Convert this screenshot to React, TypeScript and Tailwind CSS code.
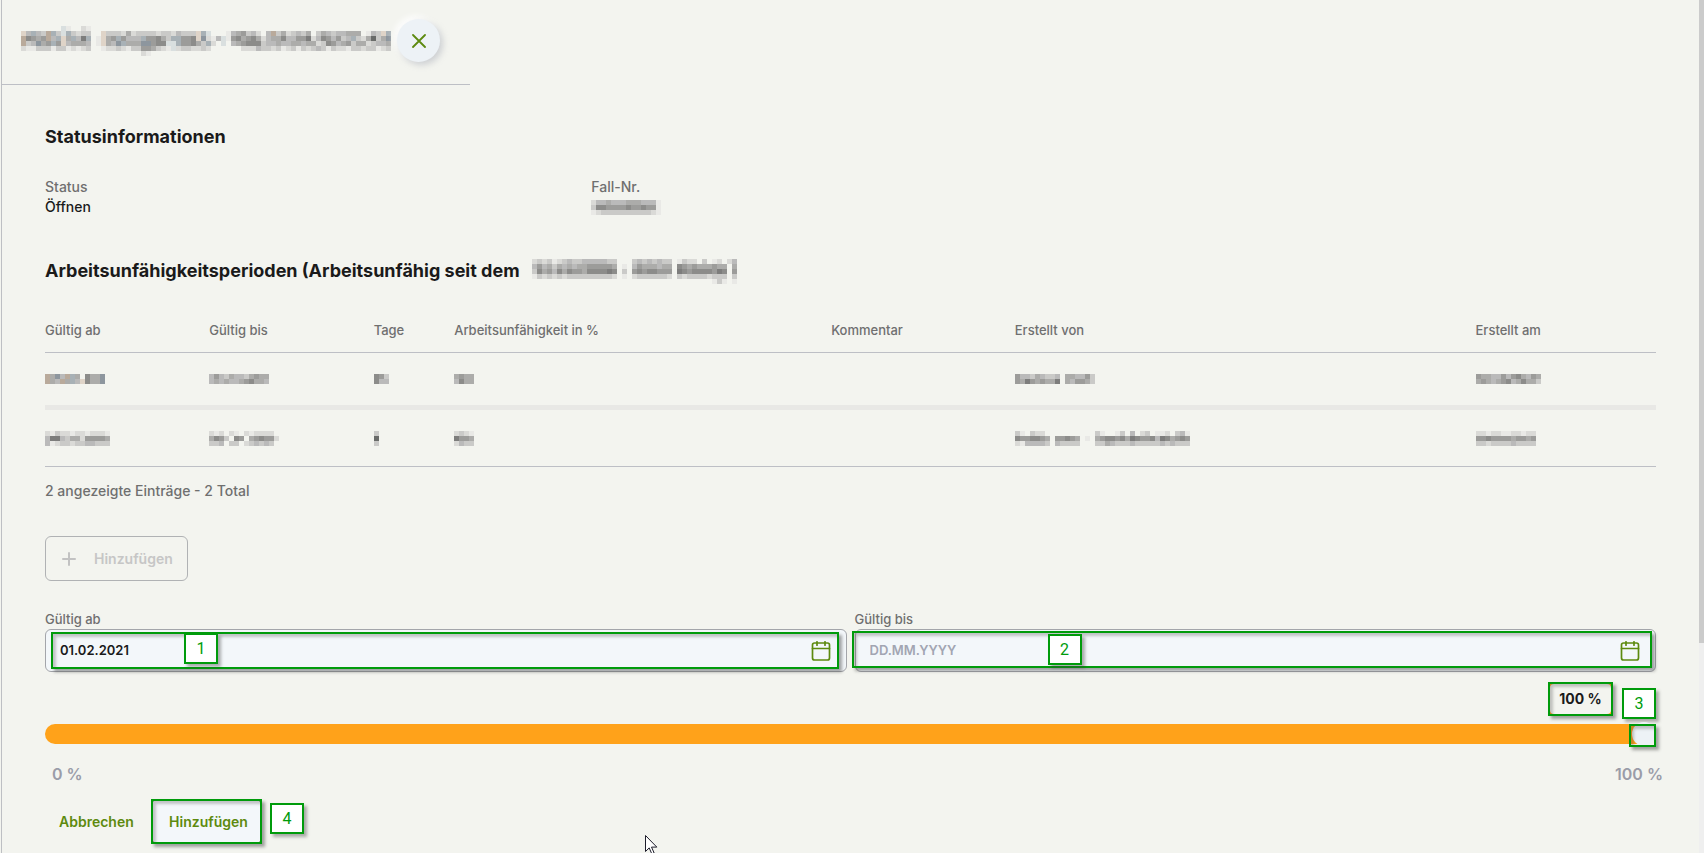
import { useState } from "react";
import type { ReactNode } from "react";

/*
 * Personal data is never rendered here, each value is a block of 5px cells
 * instead. Every character picks a colour, "." leaves the cell empty.
 */
const CELL = 5;

const CELL_COLORS: Record<string, string> = {
  "1": "#e9e9e6",
  "2": "#dadad7",
  "3": "#cacac8",
  "4": "#bababa",
  "5": "#acacaa",
  "6": "#9c9c9a",
  "7": "#8c8c8a",
  "8": "#7d7d7c",
  "9": "#696b69",
  w: "#dfd4c8",
  o: "#b9aa9b",
  c: "#d9dfdf",
  b: "#a8b1b6",
  s: "#8d969e",
};

function Mosaic({ rows }: { rows: string[] }) {
  const width = Math.max(...rows.map((r) => r.length)) * CELL;
  const height = rows.length * CELL;
  return (
    <svg width={width} height={height} shapeRendering="crispEdges" aria-hidden="true" className="block shrink-0">
      {rows.flatMap((row, y) =>
        row.split("").map((c, x) =>
          CELL_COLORS[c] ? (
            <rect key={`${x}-${y}`} x={x * CELL} y={y * CELL} width={CELL} height={CELL} fill={CELL_COLORS[c]} />
          ) : null
        )
      )}
    </svg>
  );
}

const PERSON = [
  "........c1..21",
  "w4b43ob3cb3233..w333252333323324333wbc...1456342.4o3523435.354344555.143wb",
  "o7656o4bw5b48b.1w56b6444b66753bb667ws214c1675675245574466824764634b325935s",
  "o34s56b6w45554.1w54sb555ss677ccb66753b2.c.45677734454455455237645635523445",
  "21133313312123..12232133665321c2332232......2224332312313234313221332331232".slice(0, 74),
  "........................21",
];

const SINCE = [
  "23231234334444433...34343433.1322.3.12.24",
  "46453545455666665.1.46555455.7656555655.5",
  "37564757665777787.3.67677666.8767777687.6",
  "13232323333333332.1.23333332.3233332333.3",
  "....................................131.1",
];

const CASE_NUMBER = ["24454445554441", "37766667667661", "12333333333321"];

type Period = { from: string[]; to: string[]; days: string[]; percent: string[]; by: string[]; on: string[] };

const PERIODS: Period[] = [
  {
    from: ["o5s4ob5.755s", "o54o5b4w755s"],
    to: ["464354435655", "454544567554"],
    days: ["763", "744"],
    percent: ["5655", "4755"],
    by: ["644354334.554463", "658656558.546653"],
    on: ["6554464675465", "5654567457553"],
  },
  {
    from: ["2132212212221", "4884355266665", "4123323344333"],
    to: ["212.21.212222", "5763.76.567662", "334.33.234343"],
    days: ["3", "9", "3"],
    percent: ["2321", "8665", "2433"],
    by: ["31.322..........31..13.4.23.112.341", "7667765.66765.1.5677675876674875676", "2144443.43333...3354333433333434333"],
    on: ["221221122122", "667666656656", "332333343333"],
  },
];

const COLUMNS = [
  { label: "Gültig ab", width: "w-[10.2%]" },
  { label: "Gültig bis", width: "w-[10.2%]" },
  { label: "Tage", width: "w-[5%]" },
  { label: "Arbeitsunfähigkeit in %", width: "w-[23.4%]" },
  { label: "Kommentar", width: "w-[11.4%]" },
  { label: "Erstellt von", width: "w-[28.6%]" },
  { label: "Erstellt am", width: "w-[11.2%]" },
];

/* Green frame drawn over a control, position comes from className. */
function Highlight({ className }: { className: string }) {
  return (
    <span
      className={`pointer-events-none absolute border-2 border-[#009b0b] shadow-[3px_3px_3px_rgba(60,60,60,0.45),inset_3px_3px_3px_rgba(60,60,60,0.28)] ${className}`}
    />
  );
}

function Badge({ className, children }: { className: string; children: ReactNode }) {
  return (
    <span
      className={`pointer-events-none absolute flex h-[31px] w-[34px] items-center justify-center border-2 border-[#009b0b] bg-white font-[Roboto,sans-serif] text-base font-normal text-[#009b0b] shadow-[3px_3px_3px_rgba(60,60,60,0.4)] ${className}`}
    >
      {children}
    </span>
  );
}

function CalendarIcon() {
  return (
    <svg width="20" height="20" viewBox="0 0 20 20" fill="none" stroke="#5d8a0f" strokeWidth="1.7" strokeLinecap="round">
      <rect x="1.5" y="2" width="17" height="17" rx="2" />
      <path d="M1.5 7.500h17M6 .8v3.400M14 .8v3.400" />
    </svg>
  );
}

function DateField({
  id,
  label,
  value,
  onChange,
  children,
}: {
  id: string;
  label: string;
  value: string;
  onChange: (v: string) => void;
  children: ReactNode;
}) {
  return (
    <div>
      <label htmlFor={id} className="block text-[13px] leading-5 font-medium text-[#6f6f6f]">
        {label}
      </label>
      <div className="relative flex h-[43px] items-center rounded-md border border-[#a3a5aa] bg-[#f3f7fa] pr-[15px] pl-3.5">
        <input
          id={id}
          type="text"
          value={value}
          placeholder="DD.MM.YYYY"
          onChange={(e) => onChange(e.target.value)}
          className="min-w-0 flex-1 bg-transparent text-[13px] font-semibold text-[#1a1a1a] outline-none placeholder:text-[#a2a5b2]"
        />
        <button type="button" aria-label="Kalender">
          <CalendarIcon />
        </button>
        {children}
      </div>
    </div>
  );
}

export default function App() {
  const [from, setFrom] = useState("01.02.2021");
  const [to, setTo] = useState("");
  const [percent, setPercent] = useState(100);

  return (
    <div className="relative flex min-h-screen overflow-hidden bg-[#f3f4ef] font-[Inter,sans-serif] text-[#1a1a1a]">
      <main className="ml-px min-w-0 flex-1 border-l border-[#bdbfc3]">
        <header className="flex w-[468px] items-center gap-1.5 border-b border-[#bdbfc5] pt-[19px] pb-[22px] pl-[19px]">
          <Mosaic rows={PERSON} />
          <button
            type="button"
            aria-label="Schliessen"
            className="flex size-[43px] items-center justify-center rounded-full bg-[#edf2f6] shadow-[3px_3px_6px_rgba(150,155,170,0.4),-3px_-3px_6px_rgba(255,255,255,0.9)]"
          >
            <svg width="14" height="14" viewBox="0 0 14 14" stroke="#5d8a0f" strokeWidth="1.8" strokeLinecap="round">
              <path d="M1 1l12 12M13 1L1 13" />
            </svg>
          </button>
        </header>

        <div className="px-[43px] pt-10 pb-2">
          <h2 className="text-lg leading-6 font-bold">Statusinformationen</h2>
          <dl className="mt-7 grid grid-cols-3 gap-7 text-sm leading-5 font-medium">
            <div>
              <dt className="text-[#6f6f6f]">Status</dt>
              <dd>Öffnen</dd>
            </div>
            <div>
              <dt className="text-[#6f6f6f]">Fall-Nr.</dt>
              <dd className="flex h-5 items-center">
                <Mosaic rows={CASE_NUMBER} />
              </dd>
            </div>
          </dl>

          <h2 className="mt-[42px] flex h-6 items-center gap-3 text-lg leading-6 font-bold">
            Arbeitsunfähigkeitsperioden (Arbeitsunfähig seit dem
            <Mosaic rows={SINCE} />
          </h2>

          <table className="mt-[22px] w-full table-fixed border-separate border-spacing-0 text-left">
            <thead>
              <tr>
                {COLUMNS.map((c) => (
                  <th
                    key={c.label}
                    className={`border-b border-[#bdbfc5] px-0 pt-[15px] pb-3 text-[13px] leading-5 font-medium whitespace-nowrap text-[#6f6f6f] ${c.width}`}
                  >
                    {c.label}
                  </th>
                ))}
              </tr>
            </thead>
            <tbody className="[&_td]:h-[57px] [&_td]:border-[#bdbfc5] [&_td]:p-0 [&>tr:first-child>td]:border-b-[5px] [&>tr:first-child>td]:border-[#e8e8e5] [&>tr:last-child>td]:border-b">
              {PERIODS.map((p, i) => (
                <tr key={i}>
                  <td><Mosaic rows={p.from} /></td>
                  <td><Mosaic rows={p.to} /></td>
                  <td><Mosaic rows={p.days} /></td>
                  <td><Mosaic rows={p.percent} /></td>
                  <td />
                  <td><Mosaic rows={p.by} /></td>
                  <td><Mosaic rows={p.on} /></td>
                </tr>
              ))}
            </tbody>
          </table>
          <p className="mt-3.5 text-sm leading-5 font-medium text-[#6f6f6f]">2 angezeigte Einträge - 2 Total</p>

          <button
            type="button"
            disabled
            className="mt-[35px] flex h-[45px] items-center gap-[18px] rounded-md border border-[#b0b2b4] pr-3.5 pl-4 text-sm font-semibold text-[#c6c6c6]"
          >
            <svg width="14" height="14" viewBox="0 0 14 14" stroke="#c2c2c2" strokeWidth="2" strokeLinecap="round">
              <path d="M7 1v12M1 7h12" />
            </svg>
            Hinzufügen
          </button>

          <div className="mt-7 grid grid-cols-2 gap-2">
            <DateField id="valid-from" label="Gültig ab" value={from} onChange={setFrom}>
              <Highlight className="top-0.5 right-[7px] bottom-0.5 left-[5px]" />
              <Badge className="top-[3px] left-[138px]">1</Badge>
            </DateField>
            <DateField id="valid-to" label="Gültig bis" value={to} onChange={setTo}>
              <Highlight className="top-px right-[3px] bottom-[3px] -left-1" />
              <Badge className="top-1 left-[192px]">2</Badge>
            </DateField>
          </div>

          <div className="mt-2.5 flex justify-end pr-[43px]">
            <output
              htmlFor="percent"
              className="relative flex h-[34px] w-[65px] items-center justify-center rounded-md border-2 border-[#ffa21a] text-sm font-bold"
            >
              {percent} %
              <Highlight className="-inset-0.5" />
              <Badge className="top-1 left-[72px]">3</Badge>
            </output>
          </div>
          <div className="relative mt-2 flex">
            <input
              id="percent"
              type="range"
              min={0}
              max={100}
              value={percent}
              aria-label="Arbeitsunfähigkeit in %"
              onChange={(e) => setPercent(Number(e.target.value))}
              className="h-5 w-full appearance-none rounded-full bg-[#ffa21a] [&::-webkit-slider-thumb]:size-6 [&::-webkit-slider-thumb]:appearance-none [&::-webkit-slider-thumb]:rounded-full [&::-webkit-slider-thumb]:bg-[#edf2f6]"
            />
            <Highlight className="top-0 right-0 h-[23px] w-[27px]" />
          </div>
          <div className="-mr-[7px] mt-[18px] flex justify-between pl-[7px] text-base leading-6 font-semibold text-[#9a9ca8]">
            <span>0 %</span>
            <span>100 %</span>
          </div>

          <div className="mt-[13px] flex items-center">
            <button type="button" className="h-[45px] w-[106px] pl-3.5 text-left text-sm font-semibold text-[#5d8a0f]">
              Abbrechen
            </button>
            <button
              type="button"
              className="relative h-[45px] w-[111px] rounded-md border border-[#7c8a5c] bg-[#f3f7fa] pl-1 text-sm font-semibold text-[#5d8a0f]"
            >
              Hinzufügen
              <Highlight className="-inset-px" />
              <Badge className="top-[3px] left-[118px]">4</Badge>
            </button>
          </div>
        </div>
      </main>

      <div className="w-[5px] shrink-0 bg-[#efefef]">
        <div className="h-[643px] bg-[#cbcbcb]" />
      </div>

      <svg width="13" height="20" viewBox="0 0 13 20" aria-hidden="true" className="pointer-events-none absolute top-[835px] left-[645px]">
        <path d="M.5 .5v16l3.700-3.600 2.600 6 2.300-1-2.600-5.800h5.300z" fill="#fff" stroke="#1d1d2b" />
      </svg>
    </div>
  );
}
